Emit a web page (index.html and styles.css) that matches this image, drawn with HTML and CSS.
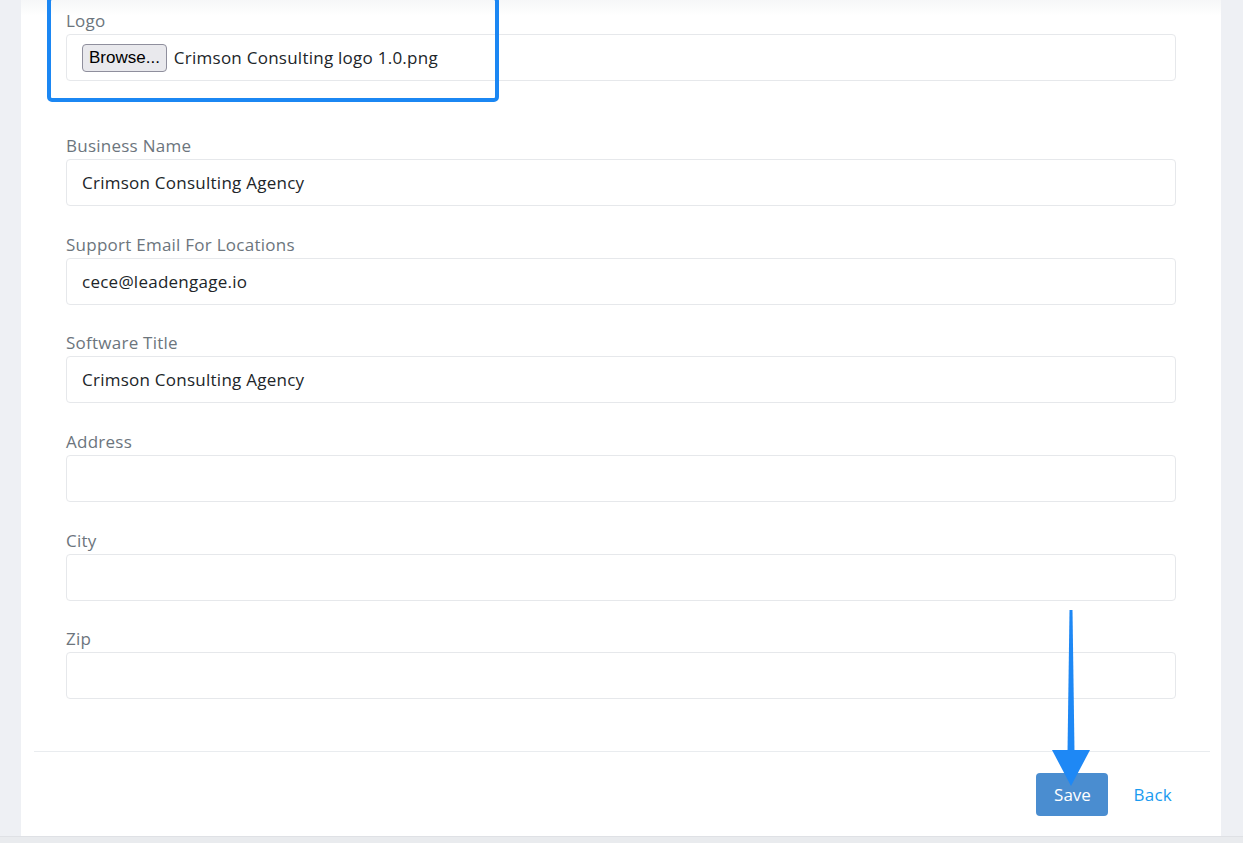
FILE: index.html
```html
<!DOCTYPE html>
<html lang="en">
<head>
  <meta charset="UTF-8">
  <meta name="viewport" content="width=device-width, initial-scale=1.0">
  <title>Agency Settings</title>
  <link rel="stylesheet" href="styles.css">
</head>
<body>
  <div class="card">
    <form class="settings-form">
      <div class="field field-logo">
        <label class="field-label">Logo</label>
        <div class="field-input file-input">
          <button type="button" class="browse">Browse...</button>
          <span class="file-name">Crimson Consulting logo 1.0.png</span>
        </div>
      </div>

      <div class="field">
        <label class="field-label">Business Name</label>
        <input class="field-input" type="text" value="Crimson Consulting Agency">
      </div>

      <div class="field">
        <label class="field-label">Support Email For Locations</label>
        <input class="field-input" type="text" value="cece@leadengage.io">
      </div>

      <div class="field">
        <label class="field-label">Software Title</label>
        <input class="field-input" type="text" value="Crimson Consulting Agency">
      </div>

      <div class="field">
        <label class="field-label">Address</label>
        <input class="field-input" type="text" value="">
      </div>

      <div class="field">
        <label class="field-label">City</label>
        <input class="field-input" type="text" value="">
      </div>

      <div class="field">
        <label class="field-label">Zip</label>
        <input class="field-input" type="text" value="">
      </div>
    </form>

    <div class="card-footer">
      <button type="button" class="btn-save">Save</button>
      <a class="btn-back" href="#">Back</a>
    </div>

    <!-- annotations drawn over the screenshot -->
    <div class="highlight-box"></div>
    <svg class="arrow" width="60" height="190" viewBox="0 0 60 190">
      <polygon points="17.5,0 20.5,0 22.5,142 15.5,142" fill="#1e88f5"/>
      <polygon points="0,140 38,140 19,176" fill="#1e88f5"/>
    </svg>
  </div>
  <div class="page-bottom"></div>
</body>
</html>
```

FILE: styles.css
```css
body {
  margin: 0;
  background-color: #eef0f4;
  font-family: 'Open Sans', 'Noto Sans', sans-serif;
  font-size: 17px;
  letter-spacing: 0.25px;
  color: #212529;
}

.card {
  position: relative;
  width: 1200px;
  margin-left: 21px;
  height: 836px;
  box-sizing: border-box;
  background: linear-gradient(#f6f7f8, #ffffff 16px);
}

.settings-form {
  padding: 11px 45px 0 45px;
}

.field {
  display: flex;
  flex-direction: column;
  margin-bottom: 28.7px;
}

.field-logo {
  margin-bottom: 55px;
}

.field-label {
  color: #6c757d;
  line-height: 20px;
  margin-bottom: 3px;
}

.field-input {
  box-sizing: border-box;
  height: 47px;
  width: 100%;
  border: 1px solid #e6e8eb;
  border-radius: 4px;
  padding: 0 15px;
  font-family: inherit;
  font-size: 17px;
  letter-spacing: 0.25px;
  color: #212529;
  background: #fff;
  outline: none;
}

.file-input {
  display: flex;
  align-items: center;
}

.browse {
  height: 28px;
  padding: 0 6px;
  background: #e9e9ed;
  border: 1px solid #8f8f9d;
  border-radius: 4px;
  font-family: 'Liberation Sans', Arial, sans-serif;
  font-size: 17px;
  color: #000;
}

.file-name {
  margin-left: 7px;
}

.card-footer {
  position: absolute;
  left: 13px;
  right: 11px;
  top: 751px;
  border-top: 1px solid #e9ecef;
  display: flex;
  justify-content: flex-end;
  align-items: center;
  padding: 21px 26px 0 0;
}

.btn-save {
  width: 72px;
  height: 43px;
  border: none;
  border-radius: 4px;
  background-color: #4a8dd0;
  color: #fff;
  font-family: inherit;
  font-size: 17px;
  font-weight: 500;
}

.btn-back {
  margin-left: 25px;
  color: #1a9bf0;
  text-decoration: none;
  padding-right: 12px;
}

.highlight-box {
  position: absolute;
  left: 26px;
  top: -4px;
  width: 444px;
  height: 98px;
  border: 4px solid #1b87f3;
  border-radius: 5px;
}

.arrow {
  position: absolute;
  left: 1031px;
  top: 610px;
}

.page-bottom {
  height: 7px;
  background: #e9ebee;
  border-top: 1px solid #dfe1e5;
  box-sizing: border-box;
}
```
